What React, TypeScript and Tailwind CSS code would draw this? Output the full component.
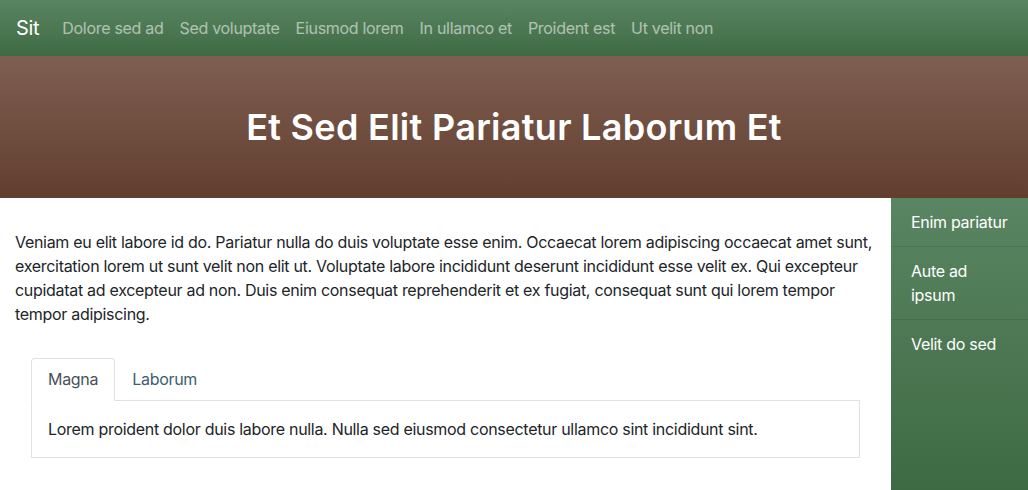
import React from "react";

export default function App() {
  const links = [
    "Dolore sed ad",
    "Sed voluptate",
    "Eiusmod lorem",
    "In ullamco et",
    "Proident est",
    "Ut velit non",
  ];
  return (
    <div
      className="w-[1028px] h-[490px] overflow-hidden bg-white text-[#212529] tracking-[-0.3px]"
      style={{ fontFamily: "Inter, 'Helvetica Neue', Arial, sans-serif" }}
    >
      <nav className="h-[56px] flex items-center px-4 bg-gradient-to-b from-[#5a8562] to-[#3e6a43]">
        <span className="text-white text-[20px] mr-[15px]">Sit</span>
        <div className="flex">
          {links.map((l) => (
            <a key={l} className="px-2 text-[16px] text-white/55 leading-6">
              {l}
            </a>
          ))}
        </div>
      </nav>
      <header className="h-[142px] flex items-center justify-center bg-gradient-to-b from-[#7e5f52] to-[#623e2f]">
        <h1 className="text-white text-[36px] font-semibold tracking-[0.3px]">
          Et Sed Elit Pariatur Laborum Et
        </h1>
      </header>
      <div className="flex h-[292px]">
        <main className="flex-1 px-[15px] pt-[32px]">
          <p className="text-[16px] leading-6">
            Veniam eu elit labore id do. Pariatur nulla do duis voluptate esse enim. Occaecat lorem adipiscing occaecat amet sunt, exercitation lorem ut sunt velit non elit ut. Voluptate labore incididunt deserunt incididunt esse velit ex. Qui excepteur cupidatat ad excepteur ad non. Duis enim consequat reprehenderit et ex fugiat, consequat sunt qui lorem tempor tempor adipiscing.
          </p>
          <div className="mx-4 mt-8">
            <div className="flex border-b border-[#dee2e6]">
              <div className="px-4 py-2 border border-[#dee2e6] border-b-white -mb-px rounded-t-[4px] bg-white text-[#495057] leading-6">
                Magna
              </div>
              <div className="px-4 py-2 border border-transparent text-[#3b5e6e] leading-6">
                Laborum
              </div>
            </div>
            <div className="border border-t-0 border-[#dee2e6] px-4 py-4 leading-6">
              Lorem proident dolor duis labore nulla. Nulla sed eiusmod consectetur ullamco sint incididunt sint.
            </div>
          </div>
        </main>
        <aside className="w-[137px] bg-gradient-to-b from-[#5a8562] to-[#3e6a43] text-white">
          <div className="pl-5 pr-2 py-3 leading-6 text-[16px] border-b border-black/10">
            Enim pariatur
          </div>
          <div className="pl-5 pr-2 py-3 leading-6 text-[16px] border-b border-black/10">
            <span className="block w-[90px]">Aute ad ipsum</span>
          </div>
          <div className="pl-5 pr-2 py-3 leading-6 text-[16px]">Velit do sed</div>
        </aside>
      </div>
    </div>
  );
}
